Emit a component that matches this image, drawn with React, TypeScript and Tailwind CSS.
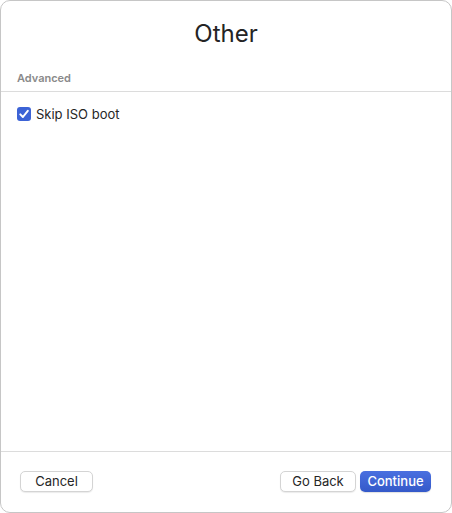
export default function App() {
  return (
    <div className="w-[452px] h-[513px] bg-white">
      <div
        className="flex h-full w-full flex-col rounded-[10px] border border-[#c6c6c6] bg-white text-[#262626]"
        style={{ fontFamily: "Inter, 'Liberation Sans', sans-serif" }}
      >
        <h1 className="pt-[18px] text-center text-[24px] leading-[30px] text-[#242424]">Other</h1>
        <div className="mt-[22px] px-[16px] text-[11px] font-semibold leading-[14px] text-[#8a8a8a]">Advanced</div>
        <div className="mt-[6px] h-px bg-[#dcdcdc]" />
        <label className="mt-[14px] flex items-center gap-[5px] px-[16px] text-[13px] leading-[16px] text-[#262626]">
          <span className="flex h-[14px] w-[14px] items-center justify-center rounded-[3px] bg-[#3c63d6]">
            <svg viewBox="0 0 14 14" className="h-[14px] w-[14px]">
              <path d="M3.3 7.4 L5.9 10 L10.8 3.8" fill="none" stroke="white" strokeWidth="2" strokeLinecap="round" strokeLinejoin="round" />
            </svg>
          </span>
          Skip ISO boot
        </label>
        <div className="flex-1" />
        <div className="h-px bg-[#dcdcdc]" />
        <div className="flex items-center pl-[19px] pr-[20px] pt-[19px] pb-[20px]">
          <button className="h-[21px] w-[73px] rounded-[5px] border border-[#d4d4d4] bg-white text-[13px] leading-[19px] text-[#262626] shadow-[0_1px_1px_rgba(0,0,0,0.08)]">
            Cancel
          </button>
          <div className="flex-1" />
          <button className="h-[21px] w-[76px] rounded-[5px] border border-[#d4d4d4] bg-white text-[13px] leading-[19px] text-[#262626] shadow-[0_1px_1px_rgba(0,0,0,0.08)]">
            Go Back
          </button>
          <button className="ml-[4px] h-[21px] w-[71px] rounded-[5px] bg-gradient-to-b from-[#4a70e0] to-[#3459c9] text-[13px] font-medium leading-[21px] text-white shadow-[0_1px_1px_rgba(0,0,0,0.12)]">
            Continue
          </button>
        </div>
      </div>
    </div>
  );
}
